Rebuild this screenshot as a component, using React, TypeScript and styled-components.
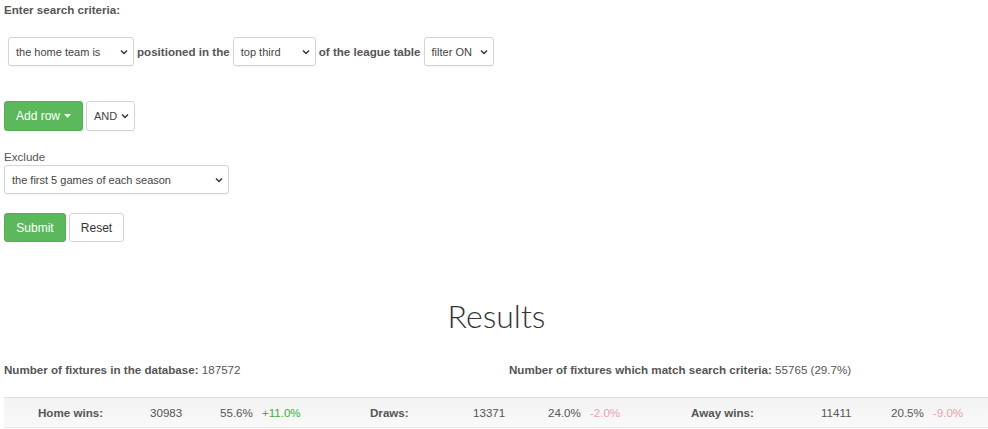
import React from "react";
import styled, { createGlobalStyle } from "styled-components";

const Global = createGlobalStyle`
  html, body { margin: 0; padding: 0; background: #fff; }
  body { font-family: "Liberation Sans", Arial, sans-serif; font-size: 11.6px; color: #555; }
`;

const Page = styled.div`
  padding: 0 0 0 4px;
  width: 984px;
  overflow: hidden;
`;

const Heading = styled.div`
  font-weight: bold;
  line-height: 20px;
`;

const CriteriaRow = styled.div`
  display: flex;
  align-items: center;
  gap: 3px;
  margin-top: 17px;
  padding-left: 4px;
`;

const Connector = styled.span`
  font-weight: bold;
  color: #555;
`;

const SelectBox = styled.div<{ $w: number; $h?: number }>`
  box-sizing: border-box;
  width: ${(p) => p.$w}px;
  height: ${(p) => p.$h ?? 29}px;
  border: 1px solid #d4d4d4;
  border-radius: 3px;
  background: #fff;
  display: flex;
  align-items: center;
  justify-content: space-between;
  padding: 0 5px 0 7px;
  font-size: 11px;
  color: #444;
  box-shadow: 0 1px 1px rgba(0, 0, 0, 0.04);
`;

const Chevron = () => (
  <svg width="8" height="6" viewBox="0 0 8 6" aria-hidden>
    <path d="M1 1.5 L4 4.5 L7 1.5" fill="none" stroke="#333" strokeWidth="1.5" />
  </svg>
);

const Select = ({ w, h, children }: { w: number; h?: number; children: React.ReactNode }) => (
  <SelectBox $w={w} $h={h}>
    <span>{children}</span>
    <Chevron />
  </SelectBox>
);

const ButtonRow = styled.div<{ $mt: number }>`
  display: flex;
  align-items: center;
  gap: 3px;
  margin-top: ${(p) => p.$mt}px;
`;

const Button = styled.div<{ $variant: "success" | "default"; $w: number; $h: number }>`
  box-sizing: border-box;
  width: ${(p) => p.$w}px;
  height: ${(p) => p.$h}px;
  display: flex;
  align-items: center;
  justify-content: center;
  gap: 4px;
  border-radius: 3px;
  font-size: 12px;
  ${(p) =>
    p.$variant === "success"
      ? `background: #5cb85c; border: 1px solid #52b052; color: #fff;`
      : `background: #fff; border: 1px solid #d4d4d4; color: #333;`}
`;

const Caret = () => (
  <svg width="7" height="4" viewBox="0 0 7 4" aria-hidden>
    <path d="M0 0 L7 0 L3.5 4 Z" fill="#fff" />
  </svg>
);

const Label = styled.div`
  margin-top: 17px;
  line-height: 17px;
  color: #555;
`;

const ResultsTitle = styled.h1`
  margin: 54px 0 0 0;
  text-align: center;
  font-family: Lato, "Open Sans", sans-serif;
  font-weight: 300;
  font-size: 32px;
  line-height: 40px;
  color: #333;
  padding-left: 1px;
`;

const Stats = styled.div`
  display: grid;
  grid-template-columns: 505px 1fr;
  margin-top: 27px;
  line-height: 14px;
`;

const Stat = styled.div`
  b { font-weight: bold; color: #555; }
`;

const SummaryRow = styled.div`
  margin-top: 20px;
  display: grid;
  grid-template-columns: 112px 70px 150px 103px 75px 143px 130px 70px 1fr;
  align-items: center;
  height: 31px;
  box-sizing: border-box;
  padding-left: 34px;
  border-top: 1px solid #e0e0e0;
  border-bottom: 1px solid #e8e8e8;
  background: linear-gradient(#f3f3f3, #f9f9f9);
  margin-right: -10px;
`;

const Cell = styled.div<{ $bold?: boolean }>`
  font-weight: ${(p) => (p.$bold ? "bold" : "normal")};
  color: #555;
  white-space: nowrap;
`;

const Diff = styled.span<{ $pos: boolean }>`
  margin-left: 9px;
  color: ${(p) => (p.$pos ? "#3cae3c" : "#eaa2ac")};
`;

type Outcome = { label: string; count: number; pct: string; diff: string };

const outcomes: Outcome[] = [
  { label: "Home wins:", count: 30983, pct: "55.6%", diff: "+11.0%" },
  { label: "Draws:", count: 13371, pct: "24.0%", diff: "-2.0%" },
  { label: "Away wins:", count: 11411, pct: "20.5%", diff: "-9.0%" },
];

export default function App() {
  return (
    <Page>
      <Global />
      <Heading>Enter search criteria:</Heading>
      <CriteriaRow>
        <Select w={126}>the home team is</Select>
        <Connector>positioned in the</Connector>
        <Select w={83}>top third</Select>
        <Connector>of the league table</Connector>
        <Select w={70}>filter ON</Select>
      </CriteriaRow>

      <ButtonRow $mt={35}>
        <Button $variant="success" $w={79} $h={30}>
          Add row <Caret />
        </Button>
        <Select w={49} h={30}>AND</Select>
      </ButtonRow>

      <Label>Exclude</Label>
      <Select w={225}>the first 5 games of each season</Select>

      <ButtonRow $mt={19}>
        <Button $variant="success" $w={62} $h={29}>Submit</Button>
        <Button $variant="default" $w={55} $h={29}>Reset</Button>
      </ButtonRow>

      <ResultsTitle>Results</ResultsTitle>

      <Stats>
        <Stat>
          <b>Number of fixtures in the database:</b> 187572
        </Stat>
        <Stat>
          <b>Number of fixtures which match search criteria:</b> 55765 (29.7%)
        </Stat>
      </Stats>

      <SummaryRow>
        {outcomes.map((o) => (
          <React.Fragment key={o.label}>
            <Cell $bold>{o.label}</Cell>
            <Cell>{o.count}</Cell>
            <Cell>
              {o.pct}
              <Diff $pos={o.diff.startsWith("+")}>{o.diff}</Diff>
            </Cell>
          </React.Fragment>
        ))}
      </SummaryRow>
    </Page>
  );
}
